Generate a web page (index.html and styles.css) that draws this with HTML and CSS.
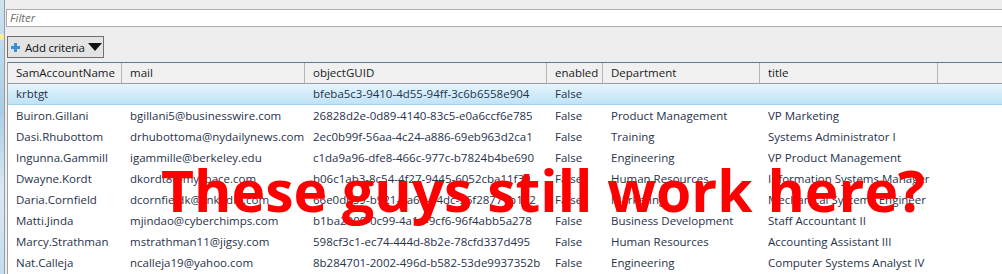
FILE: index.html
```html
<!DOCTYPE html>
<html lang="en">
<head>
    <meta charset="UTF-8">
    <title>Users</title>
    <link rel="stylesheet" href="styles.css">
</head>
<body>
    <div class="window">
        <div class="edge"><span class="edge_note"></span></div>
        <div class="main">
            <div class="filter">Filter</div>
            <div class="criteria">
                <svg class="plus" width="9" height="9" viewBox="0 0 9 9"><path d="M3 0h3v3h3v3H6v3H3V6H0V3h3z" fill="#3a8fd8"/></svg>
                <span>Add criteria</span>
                <span class="caret"></span>
            </div>
            <div class="grid">
                <div class="row head">
                    <div>SamAccountName</div><div>mail</div><div>objectGUID</div><div>enabled</div><div>Department</div><div>title</div><div></div>
                </div>
                <div id="rows"></div>
            </div>
            <div class="shout">These guys still work here?</div>
        </div>
    </div>
    <script>
        !function(){
            var users = [
                ["krbtgt", "", "bfeba5c3-9410-4d55-94ff-3c6b6558e904", "False", "", ""],
                ["Buiron.Gillani", "bgillani5@businesswire.com", "26828d2e-0d89-4140-83c5-e0a6ccf6e785", "False", "Product Management", "VP Marketing"],
                ["Dasi.Rhubottom", "drhubottoma@nydailynews.com", "2ec0b99f-56aa-4c24-a886-69eb963d2ca1", "False", "Training", "Systems Administrator I"],
                ["Ingunna.Gammill", "igammille@berkeley.edu", "c1da9a96-dfe8-466c-977c-b7824b4be690", "False", "Engineering", "VP Product Management"],
                ["Dwayne.Kordt", "dkordt8@myspace.com", "b06c1ab3-8c54-4f27-9445-6052cba11f39", "False", "Human Resources", "Information Systems Manager"],
                ["Daria.Cornfield", "dcornfieldk@linkedin.com", "66e0d659-b921-4a6e-94dc-56f28771b1e2", "False", "Marketing", "Mechanical Systems Engineer"],
                ["Matti.Jinda", "mjindao@cyberchimps.com", "b1ba2009-0c99-4a14-9cf6-96f4abb5a278", "False", "Business Development", "Staff Accountant II"],
                ["Marcy.Strathman", "mstrathman11@jigsy.com", "598cf3c1-ec74-444d-8b2e-78cfd337d495", "False", "Human Resources", "Accounting Assistant III"],
                ["Nat.Calleja", "ncalleja19@yahoo.com", "8b284701-2002-496d-b582-53de9937352b", "False", "Engineering", "Computer Systems Analyst IV"]
            ];
            var box = document.getElementById("rows");
            for(var i = 0 ; i < users.length ; i ++){
                var row = document.createElement("div");
                row.className = i == 0 ? "row selected" : "row";
                for(var j = 0 ; j < users[i].length ; j ++){
                    var cell = document.createElement("div");
                    cell.innerHTML = users[i][j];
                    row.appendChild(cell);
                }
                row.appendChild(document.createElement("div"));
                box.appendChild(row);
            }
        }();
    </script>
</body>
</html>
```

FILE: styles.css
```css
html{
    font-family: "Open Sans","Noto Sans",sans-serif;
}
body{margin: 0;padding: 0;background: #eeeeee;overflow: hidden;}
.window{
    display: flex;
    height: 274px;
    overflow: hidden;
}
.edge{
    width: 4px;
    flex: none;
    border-right: 1px solid #9a9a9a;
    background: linear-gradient(180deg,#cfe4f2 0,#a9cde6 40%,#d8e9f4 70%,#c3dcef 100%);
    position: relative;
}
.edge_note{
    position: absolute;
    left: 0;
    top: 34px;
    width: 4px;
    height: 6px;
    background: #f6ec9a;
}
.main{
    flex: 1;
    position: relative;
    padding: 9px 0 0 1px;
    min-width: 0;
    display: flex;
    flex-direction: column;
}
.filter{
    height: 16px;
    line-height: 16px;
    border: 1px solid #abadb3;
    border-right: none;
    background: #fff;
    font-size: 11.5px;
    font-style: italic;
    color: #6d6d6d;
    padding-left: 3px;
}
.criteria{
    margin: 9px 0 0 1px;
    width: 95px;
    height: 20px;
    border: 1px solid #707070;
    background: #e3e3e3;
    display: flex;
    align-items: center;
    font-size: 11.5px;
    letter-spacing: -0.2px;
    white-space: nowrap;
    color: #111;
}
.criteria .plus{
    flex: none;
    margin: 0 5px 0 3px;
}
.criteria .caret{
    flex: none;
    margin-left: 3px;
    width: 0;
    height: 0;
    border-left: 7px solid transparent;
    border-right: 7px solid transparent;
    border-top: 8px solid #111;
}
.grid{
    flex: 1;
    margin: 4px 0 0 1px;
    border-top: 1px solid #5e7b94;
    border-left: 1px solid #a0a0a0;
    background: #fff;
}
.row{
    display: grid;
    grid-template-columns: 114px 183px 242px 56px 157px 178px 1fr;
    height: 21px;
    line-height: 21px;
    font-size: 11.5px;
    color: #27324a;
    white-space: nowrap;
}
.row > div{
    padding-left: 8px;
    overflow: hidden;
}
.row.head{
    height: 20px;
    line-height: 20px;
    background: #f0f0f0;
    border-bottom: 1px solid #9c9c9c;
    color: #1a1a1a;
}
.row.head > div{
    border-right: 1px solid #b4b4b4;
}
.row.head > div:last-child{
    border-right: none;
}
.row.selected{
    height: 20px;
    line-height: 20px;
    background: linear-gradient(180deg,#e6f5fd 0,#d2ecfa 50%,#bfe3f6 100%);
    border-bottom: 1px solid #9fd2ef;
}
.shout{
    position: absolute;
    left: 156px;
    top: 155px;
    font-weight: 700;
    font-size: 57px;
    line-height: 70px;
    color: #ff0000;
    white-space: nowrap;
}
```
